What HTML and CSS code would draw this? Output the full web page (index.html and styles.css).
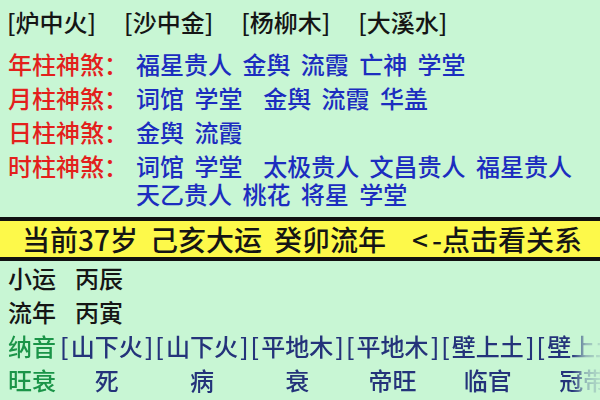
FILE: index.html
```html
<!DOCTYPE html>
<html lang="zh-CN">
<head>
<meta charset="utf-8">
<title>八字</title>
<link rel="stylesheet" href="styles.css">
</head>
<body>
<div class="page">
  <div class="nayin-top">
    <span>[炉中火]</span><span>[沙中金]</span><span>[杨柳木]</span><span>[大溪水]</span>
  </div>
  <div class="shensha">
    <div class="ss-row"><span class="ss-label">年柱神煞：</span><span class="ss-items">福星贵人 金舆 流霞 亡神 学堂</span></div>
    <div class="ss-row"><span class="ss-label">月柱神煞：</span><span class="ss-items">词馆 学堂&nbsp; 金舆 流霞 华盖</span></div>
    <div class="ss-row"><span class="ss-label">日柱神煞：</span><span class="ss-items">金舆 流霞</span></div>
    <div class="ss-row"><span class="ss-label">时柱神煞：</span><span class="ss-items">词馆 学堂&nbsp; 太极贵人 文昌贵人 福星贵人<br>天乙贵人 桃花 将星 学堂</span></div>
  </div>
  <div class="yun-bar">
    <span>当前37岁</span><span>己亥大运</span><span>癸卯流年</span><span class="yun-link"><span class="arrow">&lt;</span>-点击看关系</span>
  </div>
  <div class="plain-row"><span>小运</span><span>丙辰</span></div>
  <div class="plain-row"><span>流年</span><span>丙寅</span></div>
  <div class="pillar-table">
    <div class="pt-label">纳音</div>
    <div class="pt-cell nayin"><span>[</span>山下火<span>]</span></div>
    <div class="pt-cell nayin"><span>[</span>山下火<span>]</span></div>
    <div class="pt-cell nayin"><span>[</span>平地木<span>]</span></div>
    <div class="pt-cell nayin"><span>[</span>平地木<span>]</span></div>
    <div class="pt-cell nayin"><span>[</span>壁上土<span>]</span></div>
    <div class="pt-cell nayin"><span>[</span>壁上土<span>]</span></div>
    <div class="pt-label">旺衰</div>
    <div class="pt-cell">死</div>
    <div class="pt-cell">病</div>
    <div class="pt-cell">衰</div>
    <div class="pt-cell">帝旺</div>
    <div class="pt-cell">临官</div>
    <div class="pt-cell">冠带</div>
    <div class="pt-label">十神</div>
    <div class="pt-cell">正财</div>
    <div class="pt-cell">偏财</div>
    <div class="pt-cell">正官</div>
    <div class="pt-cell">七杀</div>
    <div class="pt-cell">正印</div>
    <div class="pt-cell">食神</div>
  </div>
</div>
</body>
</html>
```

FILE: styles.css
```css
html, body {
  margin: 0;
  padding: 0;
  background: #c8f6d4;
}
body {
  font-family: "Noto Sans CJK SC", "Noto Sans", sans-serif;
  font-size: 24px;
  font-weight: 500;
  color: #151515;
  width: 600px;
  height: 400px;
  overflow: hidden;
}
.page {
  display: flex;
  flex-direction: column;
}
.nayin-top {
  display: flex;
  gap: 28px;
  padding: 5px 0 0 7px;
  line-height: 34px;
  white-space: nowrap;
}
.shensha {
  padding-left: 8px;
  padding-top: 11px;
  display: flex;
  flex-direction: column;
  gap: 6px;
}
.ss-row {
  display: flex;
  line-height: 28px;
}
.ss-label {
  color: #e3201c;
  width: 128px;
  flex: none;
}
.ss-items {
  color: #1c2dbf;
  white-space: nowrap;
  word-spacing: 5px;
}
.yun-bar {
  margin-top: 9px;
  border-top: 4px solid #111;
  border-bottom: 4px solid #111;
  background: #fdf94a;
  height: 36px;
  line-height: 36px;
  font-size: 28px;
  padding-left: 22px;
  white-space: nowrap;
  display: flex;
  gap: 12px;
}
.yun-link {
  margin-left: 14px;
}
.arrow {
  letter-spacing: 4px;
}
.plain-row {
  display: flex;
  gap: 19px;
  padding-left: 8px;
  line-height: 34px;
}
.pillar-table {
  display: grid;
  grid-template-columns: 51px repeat(6, 95.3px);
  padding-left: 8px;
  line-height: 34px;
  white-space: nowrap;
  -webkit-mask-image: linear-gradient(to right, #000 0, #000 572px, rgba(0,0,0,0.3) 586px, rgba(0,0,0,0.12) 600px);
  mask-image: linear-gradient(to right, #000 0, #000 572px, rgba(0,0,0,0.3) 586px, rgba(0,0,0,0.12) 600px);
}
.pt-label {
  color: #1b9448;
}
.pt-cell {
  color: #24337a;
  text-align: center;
}
.pt-cell.nayin {
  display: flex;
  justify-content: space-between;
  padding: 0 1px;
}
```
